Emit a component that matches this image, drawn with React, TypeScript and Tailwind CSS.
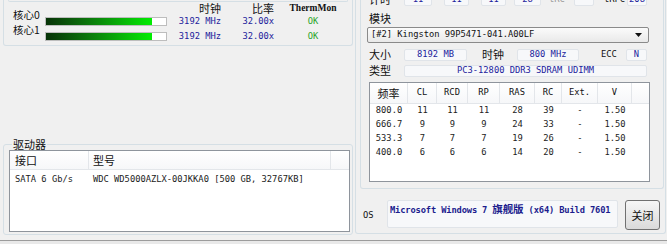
const cjk = "font-['Noto_Sans_CJK_SC',sans-serif] text-[11px]";
const mono = "font-['DejaVu_Sans_Mono','Noto_Sans_CJK_SC',monospace] text-[8.75px]";
const blue = 'text-[#22229c]';

const cores = ['核心0', '核心1'];

const timings = [
  ['800.0', '11', '11', '11', '28', '39', '-', '1.50'],
  ['666.7', '9', '9', '9', '24', '33', '-', '1.50'],
  ['533.3', '7', '7', '7', '19', '26', '-', '1.50'],
  ['400.0', '6', '6', '6', '14', '20', '-', '1.50'],
];
const colW = ['w-[38px]', 'w-[29px]', 'w-[31px]', 'w-[32px]', 'w-[35px]', 'w-[27px]', 'w-[36px]', 'w-[34px]'];
const heads = ['频率', 'CL', 'RCD', 'RP', 'RAS', 'RC', 'Ext.', 'V'];

const Box = ({ children, className }: { children?: React.ReactNode; className: string }) => (
  <div
    className={`h-[12px] bg-[#f7f8fa] border border-[#e0e4e9] rounded-[2px] flex items-center justify-center ${mono} ${blue} ${className}`}
  >
    {children}
  </div>
);

const App = () => {
  return (
    <div className="w-[667px] h-[244px] bg-[#f0f0f0] overflow-hidden flex flex-col text-[#111]">
      <div className="flex h-[240px]">
        {/* Left column */}
        <div className="w-[355px] pl-[3px] pr-[2px] flex flex-col">
          {/* CPU group */}
          <div className="h-[46px] border-x border-b border-[#d5dfe5] rounded-b-[3px]">
            <div className="mx-[4px] h-[2px] border-x border-b border-[#d5dfe5] rounded-b-[2px]" />
            <div className="flex">
              <div className="w-[42px] pl-[9px] pt-[5px] flex flex-col">
                {cores.map((c) => (
                  <div key={c} className={`h-[15px] leading-[15px] text-[10.5px] font-['Noto_Sans_CJK_SC',sans-serif]`}>
                    {c}
                  </div>
                ))}
              </div>
              <div className="flex flex-col">
                <div className="h-[12px] flex items-center">
                  <div className="w-[122px]" />
                  <div className={`w-[54px] text-right leading-[12px] ${cjk}`}>时钟</div>
                  <div className={`w-[53px] text-right leading-[12px] ${cjk}`}>比率</div>
                  <div className="w-[78px] text-center font-['Liberation_Serif',serif] font-bold text-[9.5px] leading-[12px]">
                    ThermMon
                  </div>
                </div>
                {cores.map((c) => (
                  <div key={c} className="h-[15px] flex items-center">
                    <div className="w-[122px] h-[9px] border border-[#bdbdbd] bg-white">
                      <div className="h-full w-[106px] bg-linear-to-r from-[#073307] via-[#0a8a0a] to-[#00ee00]" />
                    </div>
                    <div className={`w-[54px] text-right ${mono} ${blue}`}>3192 MHz</div>
                    <div className={`w-[53px] text-right ${mono} ${blue}`}>32.00x</div>
                    <div className={`w-[78px] text-center ${mono} text-[#2aa52a]`}>OK</div>
                  </div>
                ))}
              </div>
            </div>
          </div>

          {/* Drives group */}
          <fieldset className="mt-[92px] h-[97px] border border-[#d5dfe5] rounded-[3px] pl-[5px] pr-[2px]">
            <legend className={`ml-[3px] px-[1px] leading-[12px] ${cjk}`}>驱动器</legend>
            <div className="h-[82px] border border-[#8e949c] bg-white">
              <div className={`h-[19px] flex bg-linear-to-b from-white to-[#f6f7f9] border-b border-[#e3e6ea] ${cjk}`}>
                <div className="w-[79px] pl-[5px] flex items-center border-r border-[#e3e6ea]">接口</div>
                <div className="w-[242px] pl-[4px] flex items-center border-r border-[#e3e6ea]">型号</div>
              </div>
              <div className={`h-[14px] mt-[3px] flex items-center text-[#222] ${mono}`}>
                <div className="w-[79px] pl-[5px]">SATA 6 Gb/s</div>
                <div className="pl-[4px]">WDC WD5000AZLX-00JKKA0 [500 GB, 32767KB]</div>
              </div>
            </div>
          </fieldset>
        </div>

        {/* Right column */}
        <div className="w-[311px] h-[234px] border-x border-b border-[#d5dfe5] rounded-b-[3px] flex flex-col">
          {/* Memory group */}
          <div className="ml-[4px] w-[304px] h-[189px] border-x border-b border-[#d5dfe5] rounded-b-[3px] flex flex-col">
            <div className="-mt-[7px] h-[13px] flex items-center">
              <div className={`ml-[8px] w-[35px] ${cjk}`}>计时</div>
              <Box className="w-[28px]">11</Box>
              <Box className="ml-[12px] w-[25px]">11</Box>
              <Box className="ml-[12px] w-[25px]">11</Box>
              <Box className="ml-[8px] w-[27px]">28</Box>
              <div className={`ml-[8px] w-[25px] text-[#9a9a9a] ${mono}`}>tRC</div>
              <Box className="w-[20px]" />
              <div className={`ml-[10px] w-[23px] ${mono}`}>tRFC</div>
              <Box className="w-[20px]">208</Box>
            </div>

            <div className={`ml-[8px] mt-[6px] h-[12px] leading-[12px] ${cjk}`}>模块</div>

            <div className="ml-[6px] mt-[3px] w-[282px] h-[16px] border border-[#8a8a8a] rounded-[2px] bg-linear-to-b from-[#fbfbfb] to-[#e9e9e9] flex items-center justify-between px-[3px]">
              <span className={`${mono} text-[#111]`}>[#2] Kingston 99P5471-041.A00LF</span>
              <svg width="7" height="4" viewBox="0 0 7 4" className="mr-[3px]">
                <polygon points="0,0 7,0 3.5,4" fill="#111" />
              </svg>
            </div>

            <div className="mt-[5px] h-[13px] flex items-center">
              <div className={`ml-[8px] w-[35px] ${cjk}`}>大小</div>
              <Box className="w-[63px]">8192 MB</Box>
              <div className={`ml-[15px] w-[35px] ${cjk}`}>时钟</div>
              <Box className="w-[62px]">800 MHz</Box>
              <div className={`ml-[22px] w-[25px] ${mono}`}>ECC</div>
              <Box className="w-[21px]">N</Box>
            </div>

            <div className="mt-[3px] h-[13px] flex items-center">
              <div className={`ml-[8px] w-[35px] ${cjk}`}>类型</div>
              <Box className="w-[243px]">PC3-12800 DDR3 SDRAM UDIMM</Box>
            </div>

            <div className="ml-[8px] mt-[5px] w-[281px] h-[100px] border border-[#8e949c] bg-white">
              <div className="h-[21px] flex bg-linear-to-b from-white to-[#f6f7f9] border-b border-[#e3e6ea]">
                {heads.map((h, i) => (
                  <div
                    key={h}
                    className={`${colW[i]} flex items-center justify-center border-r border-[#e3e6ea] ${i === 0 ? cjk : mono}`}
                  >
                    {h}
                  </div>
                ))}
              </div>
              {timings.map((row) => (
                <div key={row[0]} className={`h-[14px] flex items-center text-[#222] ${mono}`}>
                  {row.map((v, i) => (
                    <div key={i} className={`${colW[i]} text-center`}>
                      {v}
                    </div>
                  ))}
                </div>
              ))}
            </div>
          </div>

          {/* OS row */}
          <div className="mt-[11px] flex items-start">
            <div className={`ml-[7px] w-[24px] mt-[9px] ${mono}`}>OS</div>
            <div className="w-[231px] h-[28px] bg-[#f7f8fa] border border-[#e0e4e9] rounded-[2px] pl-[2px] pt-[1px] overflow-hidden">
              <div className={`${mono} text-[#1c1c8e] font-bold leading-[13px] whitespace-nowrap tracking-[-0.15px]`}>
                Microsoft Windows 7 <span className="font-['Noto_Sans_CJK_SC',sans-serif] text-[10.5px]">旗舰版</span> (x64) Build 7601
              </div>
            </div>
            <button className="ml-[7px] w-[35px] h-[30px] border border-[#707070] rounded-[3px] bg-linear-to-b from-[#f6f6f6] to-[#dadada] flex items-center justify-center">
              <span className={cjk}>关闭</span>
            </button>
          </div>
        </div>
      </div>
      <div className="h-[4px] border-t border-[#9c9c9c] bg-[#e9e9e9]" />
    </div>
  );
};

export default App;
